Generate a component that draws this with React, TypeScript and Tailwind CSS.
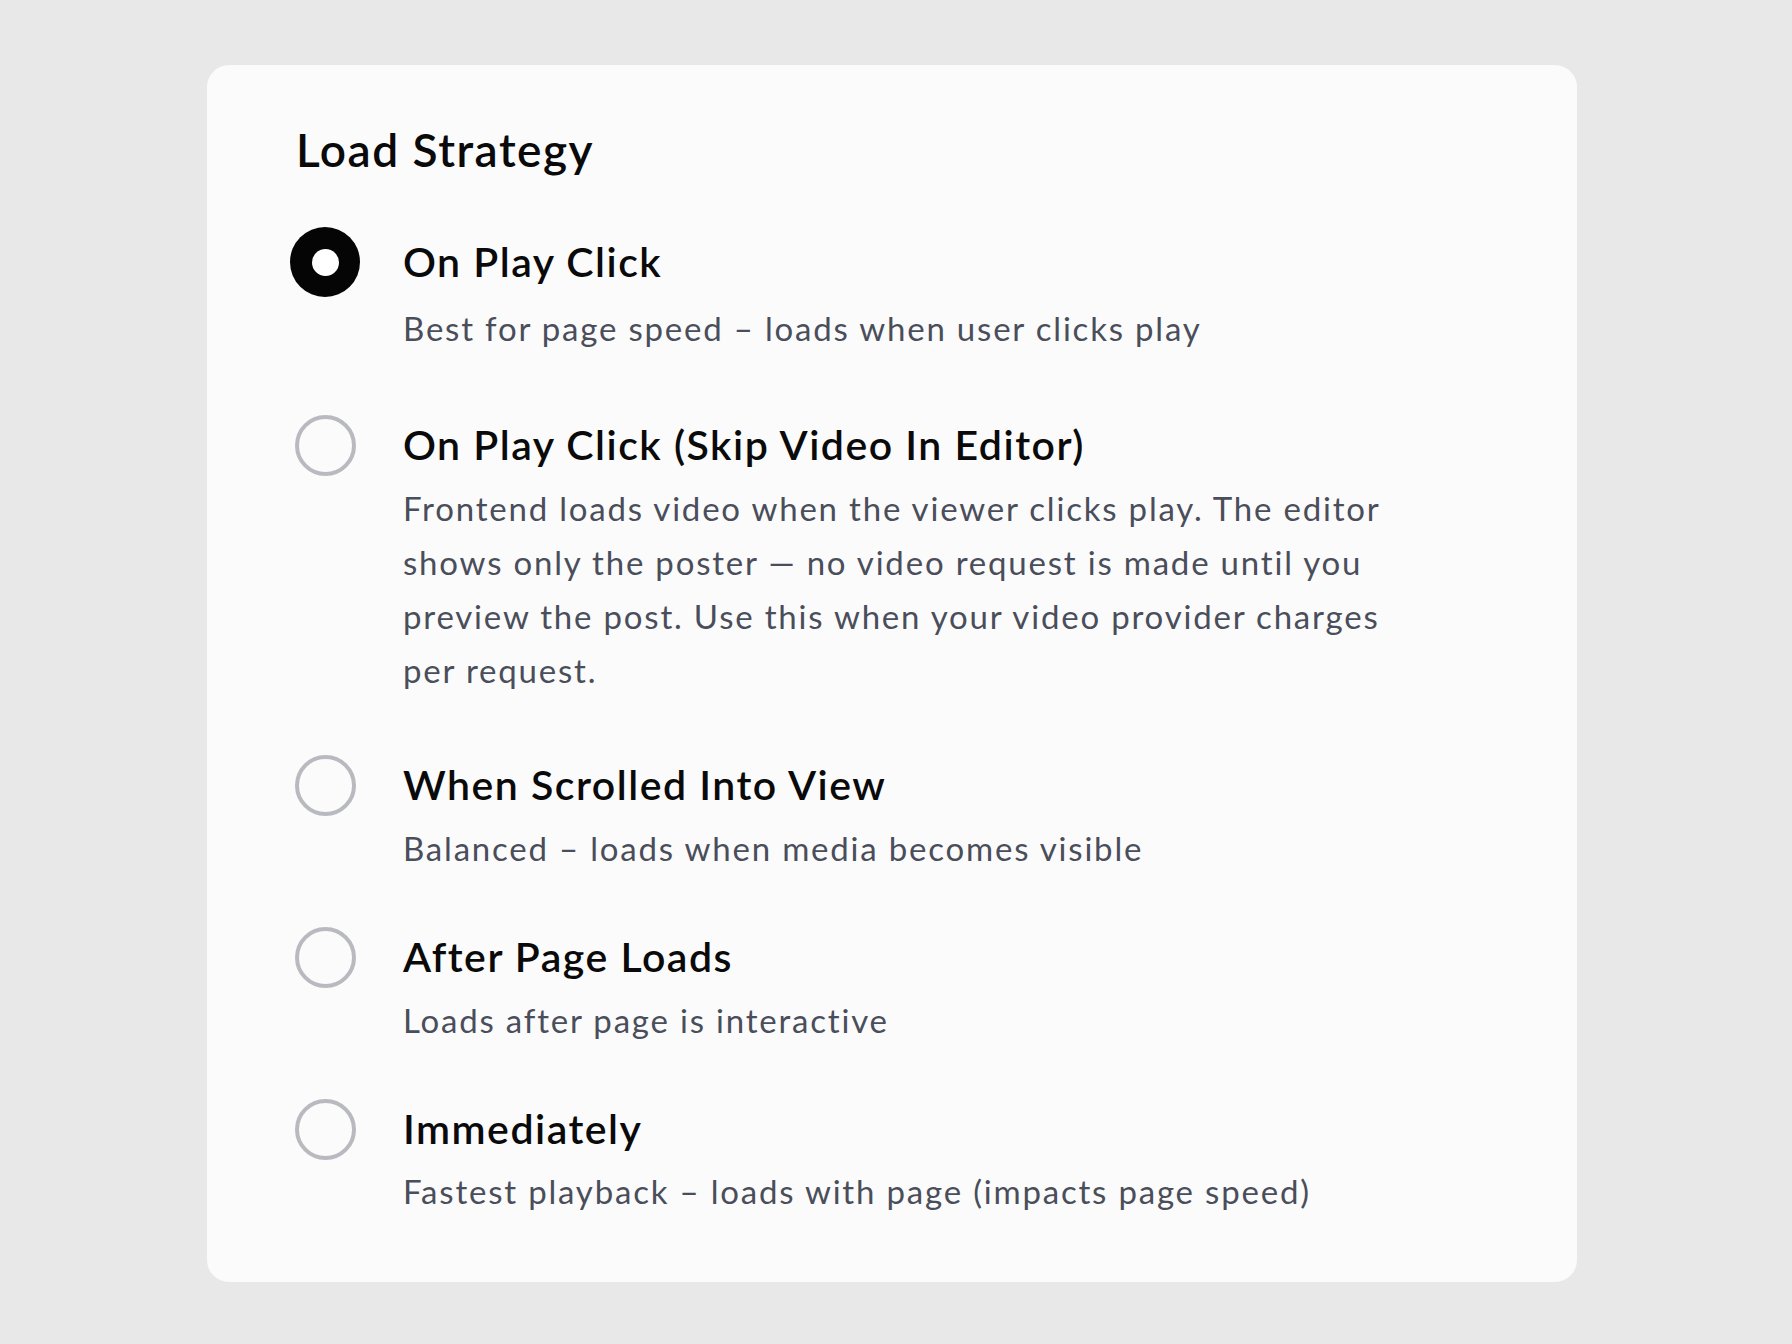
import React from "react";

type Opt = { title: string; lines: string[]; selected?: boolean; gapTop: number; descGap: number };

const options: Opt[] = [
  { title: "On Play Click", lines: ["Best for page speed – loads when user clicks play"], selected: true, gapTop: 0, descGap: 11 },
  {
    title: "On Play Click (Skip Video In Editor)",
    lines: [
      "Frontend loads video when the viewer clicks play. The editor",
      "shows only the poster — no video request is made until you",
      "preview the post. Use this when your video provider charges",
      "per request.",
    ],
    gapTop: 62,
    descGap: 8,
  },
  { title: "When Scrolled Into View", lines: ["Balanced – loads when media becomes visible"], gapTop: 60, descGap: 8 },
  { title: "After Page Loads", lines: ["Loads after page is interactive"], gapTop: 54, descGap: 8 },
  { title: "Immediately", lines: ["Fastest playback – loads with page (impacts page speed)"], gapTop: 54, descGap: 7 },
];

function Radio({ selected }: { selected?: boolean }) {
  if (selected) {
    return (
      <div className="w-[70px] h-[70px] rounded-full bg-[#050505] flex items-center justify-center">
        <div className="w-[27px] h-[27px] rounded-full bg-white" />
      </div>
    );
  }
  return <div className="w-[61px] h-[61px] rounded-full border-[4.5px] border-[#b9babf] bg-transparent" />;
}

export default function App() {
  return (
    <div
      className="w-[1792px] h-[1344px] bg-[#e8e8e8] pt-[65px] pl-[207px]"
      style={{ fontFamily: "Lato, 'Noto Sans', sans-serif" }}
    >
      <div className="w-[1370px] h-[1217px] rounded-[22px] bg-[#fbfbfc] pt-[57px] pl-[83px]">
        <h2 className="ml-[6px] text-[46px] leading-[56px] font-semibold text-[#0a0a0a] tracking-[1.5px]">
          Load Strategy
        </h2>
        <div className="mt-[56px] flex flex-col">
          {options.map((o) => (
            <div key={o.title} className="flex flex-col" style={{ marginTop: o.gapTop }}>
              <div className="flex items-center">
                <div className="w-[70px] h-[56px] flex items-center justify-center">
                  <Radio selected={o.selected} />
                </div>
                <div className="ml-[43px] text-[41px] leading-[56px] font-semibold text-[#0a0a0a] tracking-[1.5px] whitespace-nowrap">
                  {o.title}
                </div>
              </div>
              <div className="ml-[113px] flex flex-col" style={{ marginTop: o.descGap }}>
                {o.lines.map((l) => (
                  <span
                    key={l}
                    className="block text-[33px] leading-[54px] text-[#4a4e5a] tracking-[1.8px] whitespace-nowrap"
                  >
                    {l}
                  </span>
                ))}
              </div>
            </div>
          ))}
        </div>
      </div>
    </div>
  );
}
